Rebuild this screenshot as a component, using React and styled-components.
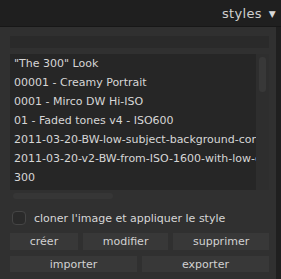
import React from 'react'
import styled, { createGlobalStyle } from 'styled-components'

const Global = createGlobalStyle`
  html, body {
    margin: 0;
    padding: 0;
    background: #1f1f1f;
  }
  body {
    font-family: "DejaVu Sans", "Liberation Sans", sans-serif;
    width: 281px;
    height: 279px;
    overflow: hidden;
  }
`

const Page = styled.div`
  width: 281px;
  height: 279px;
  display: flex;
  flex-direction: column;
  background: #1f1f1f;
`

const Header = styled.div`
  height: 26px;
  display: flex;
  align-items: center;
  justify-content: flex-end;
  gap: 7px;
  padding-right: 5px;
  border-bottom: 1px solid #171717;
  color: #cfcfcf;
  font-size: 13px;
  letter-spacing: 0.3px;
`

const Arrow = styled.span`
  font-size: 9px;
  color: #d8d8d8;
  margin-top: 1px;
`

const Panel = styled.div`
  width: 276px;
  flex: 1;
  box-sizing: border-box;
  background: #303030;
  padding: 9px 7px 7px 10px;
  display: flex;
  flex-direction: column;
`

const Search = styled.div`
  height: 12px;
  background: #2a2a2a;
  margin-right: 0;
`

const ListWrap = styled.div`
  margin-top: 6px;
  height: 136px;
  display: flex;
`

const List = styled.div`
  flex: 1;
  background: #262626;
  overflow: hidden;
`

const Item = styled.div`
  height: 19px;
  line-height: 19px;
  padding-left: 4px;
  font-size: 11px;
  color: #d6d6d6;
  white-space: nowrap;
`

const VScroll = styled.div`
  width: 13px;
  background: #2e2e2e;
  display: flex;
  justify-content: center;
  padding-top: 3px;
  box-sizing: border-box;
`

const Thumb = styled.div`
  width: 7px;
  height: 35px;
  border-radius: 3px;
  background: #383838;
`

const HScroll = styled.div`
  margin-top: 3px;
  height: 6px;
  width: 100px;
  margin-left: 3px;
  border-radius: 3px;
  background: #363636;
`

const CheckRow = styled.label`
  margin-top: 12px;
  display: flex;
  align-items: center;
  gap: 8px;
  padding-left: 2px;
  font-size: 11px;
  color: #d6d6d6;
`

const Box = styled.span`
  width: 14px;
  height: 14px;
  box-sizing: border-box;
  border-radius: 4px;
  border: 1px solid #454545;
  background: #2a2a2a;
`

const ButtonRow = styled.div`
  display: flex;
  gap: 5px;
  margin-top: ${({ first }) => (first ? '8px' : '6px')};
  padding-left: ${({ first }) => (first ? '0' : '0')};
`

const Button = styled.div`
  flex: ${({ even }) => (even ? '1 1 0' : '1 1 auto')};
  height: ${({ h }) => h}px;
  background: #383838;
  color: #d2d2d2;
  font-size: 11px;
  display: flex;
  align-items: center;
  justify-content: center;
  white-space: nowrap;
`

const styles = [
  '"The 300" Look',
  '00001 - Creamy Portrait',
  '0001 - Mirco DW Hi-ISO',
  '01 - Faded tones v4 - ISO600',
  '2011-03-20-BW-low-subject-background-contrast',
  '2011-03-20-v2-BW-from-ISO-1600-with-low-contrast',
  '300',
]

export default function App() {
  return (
    <Page>
      <Global />
      <Header>
        <span>styles</span>
        <Arrow>▼</Arrow>
      </Header>
      <Panel>
        <Search />
        <ListWrap>
          <List>
            {styles.map((s) => (
              <Item key={s}>{s}</Item>
            ))}
          </List>
          <VScroll>
            <Thumb />
          </VScroll>
        </ListWrap>
        <HScroll />
        <CheckRow>
          <Box />
          cloner l'image et appliquer le style
        </CheckRow>
        <ButtonRow first>
          <Button h={17}>créer</Button>
          <Button h={17}>modifier</Button>
          <Button h={17}>supprimer</Button>
        </ButtonRow>
        <ButtonRow>
          <Button h={16} even>importer</Button>
          <Button h={16} even>exporter</Button>
        </ButtonRow>
      </Panel>
    </Page>
  )
}
